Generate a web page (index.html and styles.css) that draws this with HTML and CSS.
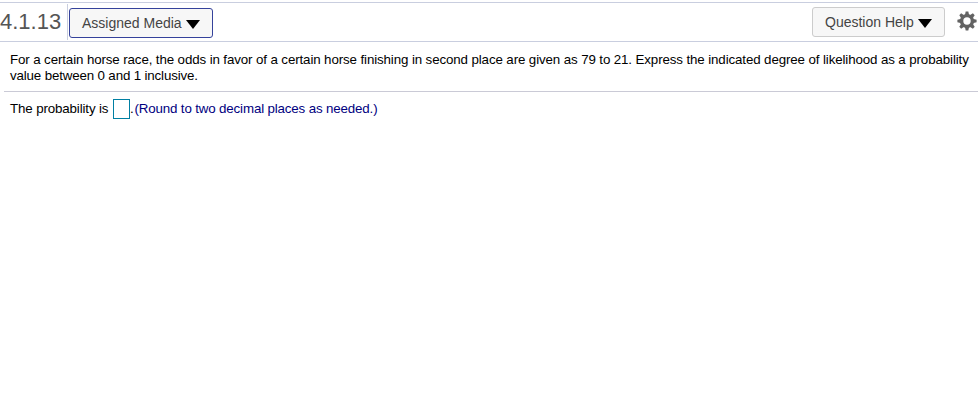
FILE: index.html
```html
<!DOCTYPE html>
<html lang="en">
  <head>
    <meta charset="UTF-8" />
    <meta name="viewport" content="width=device-width, initial-scale=1.0" />
    <title>4.1.13</title>
    <link rel="stylesheet" href="styles.css">
  </head>
  <body>
    <div class="toolbar">
      <div class="number">4.1.13</div>
      <button type="button" class="btn btn-media">
        <span class="media-label">Assigned Media</span>
        <svg class="arrow" width="14" height="9" viewBox="0 0 14 9"><path d="M0 0h14L7 9z" /></svg>
      </button>
      <button type="button" class="btn btn-help">
        <span class="help-label">Question Help</span>
        <svg class="arrow" width="14" height="9" viewBox="0 0 14 9"><path d="M0 0h14L7 9z" /></svg>
      </button>
      <svg class="gear" width="20" height="20" viewBox="0 0 20 20">
        <g fill="#636363">
          <path id="tooth" d="M8.7 0.4h2.6l0.9 4v11.2l-0.9 4H8.7l-0.9-4V4.400z" />
          <use href="#tooth" transform="rotate(45 10 10)" />
          <use href="#tooth" transform="rotate(90 10 10)" />
          <use href="#tooth" transform="rotate(135 10 10)" />
          <circle cx="10" cy="10" r="7.1" />
        </g>
        <circle cx="10" cy="10" r="3.7" fill="#fff" />
      </svg>
    </div>
    <div class="question">
      <div class="line1">For a certain horse race, the odds in favor of a certain horse finishing in second place are given as 79 to 21. Express the indicated degree of likelihood as a probability</div>
      <div class="line2">value between 0 and 1 inclusive.</div>
    </div>
    <div class="answer">
      <label for="prob" class="prompt">The probability is</label>
      <input type="text" id="prob" class="box" />
      <span class="dot">.</span>
      <span class="hint">(Round to two decimal places as needed.)</span>
    </div>
  </body>
</html>
```
FILE: styles.css
```css
body {
  margin: 0;
  background: #fff;
  color: #000;
  font-family: "Liberation Sans", Arial, sans-serif;
  font-size: 13.33px;
  line-height: 16px;
  overflow: hidden;
}
.toolbar {
  display: flex;
  align-items: flex-start;
  box-sizing: border-box;
  height: 40px;
  margin-top: 2px;
  border-top: 1px solid #c9cedf;
  border-bottom: 1px solid #c9cedf;
}
.number {
  box-sizing: border-box;
  width: 68px;
  height: 36px;
  margin-top: 1px;
  border-right: 1px solid #c9cedf;
  color: #555;
  font-size: 22px;
  line-height: 35px;
  white-space: nowrap;
}
.btn {
  display: flex;
  align-items: center;
  box-sizing: border-box;
  height: 30px;
  padding: 0 12px;
  background: #f7f7f7;
  border: 1px solid #ccc;
  border-radius: 3px;
  color: #444;
  font-family: inherit;
  font-size: 14px;
  white-space: nowrap;
}
.btn-media {
  width: 144px;
  margin: 5px 0 0 1px;
  border-color: #35429b;
}
.btn-help {
  width: 133px;
  margin: 4px 12px 0 auto;
}
.arrow {
  margin: 2px 0 0 4px;
  fill: #000;
}
.gear {
  margin: 8px 1px 0 0;
}
.question {
  margin-left: 4px;
  padding: 10px 0 7px 6px;
  border-bottom: 1px solid #cacad6;
  white-space: nowrap;
}
.line1 {
  letter-spacing: -0.117px;
}
.line2 {
  letter-spacing: -0.15px;
}
.answer {
  display: flex;
  align-items: flex-start;
  padding: 7px 0 0 10px;
  line-height: 20px;
  white-space: nowrap;
}
.prompt {
  width: 99px;
  letter-spacing: -0.13px;
}
.box {
  box-sizing: border-box;
  width: 17px;
  height: 20px;
  margin: 0 0 0 4px;
  padding: 0;
  border: 1px solid #007fa3;
}
.dot {
  width: 4.5px;
}
.hint {
  color: #000080;
  letter-spacing: -0.15px;
}
```
